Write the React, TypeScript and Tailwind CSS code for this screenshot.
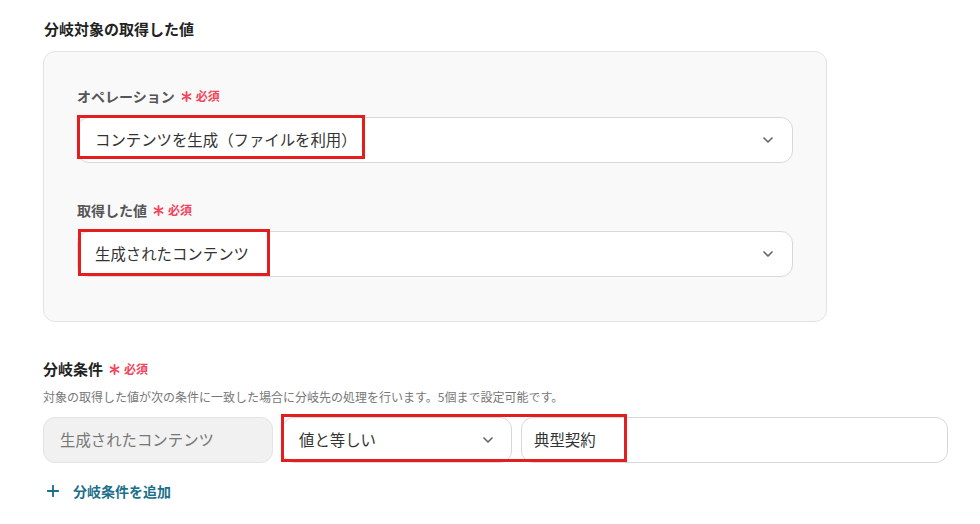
import { ChevronDown, Plus } from 'lucide-react';

const font = { fontFamily: '"Noto Sans CJK JP", "Noto Sans", sans-serif' };

const Required = () => (
  <span className="ml-[6px] inline-flex items-center gap-[4px] text-[12px] font-bold text-[#f0445a]">
    <svg viewBox="0 0 12 12" className="h-[11px] w-[11px]" stroke="currentColor" strokeWidth="2" strokeLinecap="round">
      <path d="M6 1v10M1.7 3.5l8.6 5M1.7 8.5l8.6-5" />
    </svg>
    必須
  </span>
);

const SelectBox = ({ value }: { value: string }) => (
  <div className="flex h-[46px] items-center justify-between rounded-[12px] border border-[#d6d8de] bg-white pl-[17px] pr-[16px]">
    <span className="text-[15.4px] text-[#333]">{value}</span>
    <ChevronDown className="h-4 w-4 text-[#666]" strokeWidth={2.5} />
  </div>
);

export default function App() {
  return (
    <div style={font} className="h-[524px] w-[980px] overflow-hidden bg-white pl-[43px] pt-[18px]">
      <h2 className="pl-[1px] text-[15px] font-bold leading-[22px] text-[#222]">分岐対象の取得した値</h2>

      {/* Card */}
      <div className="mt-[11px] h-[271px] w-[784px] rounded-[12px] border border-[#e3e3e3] bg-[#f9f9f9] px-[33px] pt-[33px]">
        <div className="flex items-center text-[14px] font-bold leading-[22px] text-[#555]">
          オペレーション
          <Required />
        </div>
        <div className="relative mt-[10px]">
          <SelectBox value="コンテンツを生成（ファイルを利用）" />
          <div className="pointer-events-none absolute left-0 top-[-2px] h-[44px] w-[288px] border-[3px] border-[#e41e1e]" />
        </div>

        <div className="mt-[36px] flex items-center text-[14px] font-bold leading-[22px] text-[#555]">
          取得した値
          <Required />
        </div>
        <div className="relative mt-[10px]">
          <SelectBox value="生成されたコンテンツ" />
          <div className="pointer-events-none absolute left-[1px] top-[-2px] h-[47px] w-[192px] border-[3px] border-[#e41e1e]" />
        </div>
      </div>

      {/* Conditions */}
      <div className="mt-[36px] flex items-center text-[15px] font-bold leading-[22px] text-[#222]">
        分岐条件
        <Required />
      </div>
      <p className="mt-[8px] text-[12px] leading-[18px] text-[#777]">
        対象の取得した値が次の条件に一致した場合に分岐先の処理を行います。5個まで設定可能です。
      </p>
      <div className="relative mt-[11px] flex h-[46px] w-[905px] gap-[9px]">
        <div className="flex w-[230px] items-center rounded-[12px] border border-[#e3e3e3] bg-[#f1f1f1] pl-[16px] text-[15.4px] text-[#777]">
          生成されたコンテンツ
        </div>
        <div className="flex w-[230px] items-center justify-between rounded-[12px] border border-[#d6d8de] bg-white pl-[16px] pr-[15px] text-[15.4px] text-[#333]">
          値と等しい
          <ChevronDown className="h-4 w-4 text-[#666]" strokeWidth={2.5} />
        </div>
        <div className="flex flex-1 items-center rounded-[12px] border border-[#d6d8de] bg-white pl-[12px] text-[15.4px] text-[#333]">
          典型契約
        </div>
        <div className="pointer-events-none absolute left-[238px] top-[-3px] h-[48px] w-[346px] border-[3px] border-[#e41e1e]" />
      </div>

      <div className="mt-[17px] flex items-center gap-[11px] pl-[1px] text-[14px] font-bold leading-[22px] text-[#1d6f8a]">
        <Plus className="h-[18px] w-[18px]" strokeWidth={2.5} />
        分岐条件を追加
      </div>
    </div>
  );
}
